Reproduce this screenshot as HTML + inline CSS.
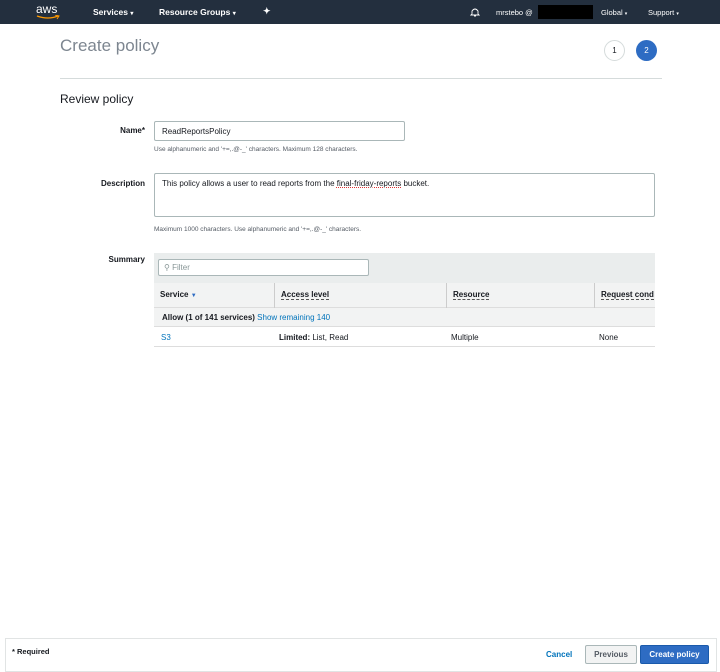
<!DOCTYPE html>
<html><head><style>
*{box-sizing:border-box;margin:0;padding:0}
body{width:720px;height:670px;background:#fff;font-family:"Liberation Sans",Arial,sans-serif;position:relative;overflow:hidden;color:#16191f}
.a{position:absolute;white-space:nowrap}
.nav{position:absolute;left:0;top:0;width:720px;height:24px;background:#232f3e;color:#fff;font-size:8.5px;font-weight:bold}
.lbl{font-size:8px;font-weight:bold;text-align:right;width:60px}
.hint{font-size:6.5px;color:#545b64}
.box{position:absolute;border:1px solid #aab7b8;border-radius:2px;background:#fff;font-size:8px;padding:5px 7px}
.th{position:absolute;top:283px;height:25px;font-size:8px;font-weight:bold;padding:7px 6px;border-left:1px solid #ccc;white-space:nowrap;overflow:hidden}
.dot{border-bottom:1px dashed #555}
</style></head><body>
<div class="nav">
 <div class="a" style="left:36px;top:2px;font-size:12px;font-weight:normal">aws</div>
 <svg class="a" style="left:36px;top:15px" width="24" height="5"><path d="M1 1 Q12 5 22 1" stroke="#f90" stroke-width="1.3" fill="none"/><path d="M19 0 L23 1 L21 4" stroke="#f90" stroke-width="1" fill="none"/></svg>
 <div class="a" style="left:93px;top:7px">Services <span style="font-size:6px">&#9662;</span></div>
 <div class="a" style="left:159px;top:7px">Resource Groups <span style="font-size:6px">&#9662;</span></div>
 <div class="a" style="left:263px;top:6px;font-size:9px">&#10022;</div>
 <svg class="a" style="left:470px;top:7px" width="10" height="10"><path d="M2 7 L2 4 Q5 0 8 4 L8 7 L9 8 L1 8 Z M4 9 L6 9" stroke="#fff" stroke-width="0.9" fill="none"/></svg>
 <div class="a" style="left:496px;top:8px;font-size:7.5px;font-weight:normal">mrstebo @</div>
 <div class="a" style="left:538px;top:5px;width:55px;height:14px;background:#000"></div>
 <div class="a" style="left:601px;top:8px;font-size:7.5px;font-weight:normal">Global <span style="font-size:5px">&#9662;</span></div>
 <div class="a" style="left:648px;top:8px;font-size:7.5px;font-weight:normal">Support <span style="font-size:5px">&#9662;</span></div>
</div>
<div class="a" style="left:60px;top:36px;font-size:17px;color:#7d8690">Create policy</div>
<div class="a" style="left:604px;top:40px;width:21px;height:21px;border:1px solid #d5dbdb;border-radius:50%;font-size:8px;text-align:center;line-height:19px">1</div>
<div class="a" style="left:636px;top:40px;width:21px;height:21px;background:#2e6cc3;border-radius:50%;font-size:8px;text-align:center;line-height:21px;color:#fff">2</div>
<div class="a" style="left:60px;top:78px;width:602px;height:1px;background:#d5dbdb"></div>
<div class="a" style="left:60px;top:92px;font-size:12px;color:#16191f">Review policy</div>

<div class="a lbl" style="left:85px;top:126px">Name*</div>
<div class="box" style="left:154px;top:121px;width:251px;height:20px;font-size:8px">ReadReportsPolicy</div>
<div class="a hint" style="left:154px;top:146px">Use alphanumeric and '+=,.@-_' characters. Maximum 128 characters.</div>

<div class="a lbl" style="left:85px;top:179px">Description</div>
<div class="box" style="left:154px;top:173px;width:501px;height:44px">This policy allows a user to read reports from the <span style="text-decoration:underline dotted #d33">final-friday-reports</span> bucket.</div>
<div class="a hint" style="left:154px;top:226px">Maximum 1000 characters. Use alphanumeric and '+=,.@-_' characters.</div>

<div class="a lbl" style="left:85px;top:255px">Summary</div>
<div class="a" style="left:154px;top:253px;width:501px;height:30px;background:#eaeded"></div>
<div class="box" style="left:158px;top:259px;width:211px;height:17px;padding:3px 5px;color:#879596">&#9906; Filter</div>
<div class="a" style="left:154px;top:283px;width:501px;height:25px;background:#f2f3f3;border-bottom:1px solid #ddd"></div>
<div class="th" style="left:154px;width:120px;border-left:none">Service <span style="color:#2e6cc3;font-size:6px">&#9660;</span></div>
<div class="th" style="left:274px;width:172px"><span class="dot">Access level</span></div>
<div class="th" style="left:446px;width:148px"><span class="dot">Resource</span></div>
<div class="th" style="left:594px;width:61px"><span class="dot">Request cond</span></div>
<div class="a" style="left:154px;top:308px;width:501px;height:19px;background:#f2f3f3;border-bottom:1px solid #ddd"></div>
<div class="a" style="left:162px;top:313px;font-size:8px;font-weight:bold">Allow (1 of 141 services) <span style="font-weight:normal;color:#0073bb">Show remaining 140</span></div>
<div class="a" style="left:154px;top:327px;width:501px;height:20px;border-bottom:1px solid #ddd"></div>
<div class="a" style="left:161px;top:333px;font-size:8px;color:#0073bb">S3</div>
<div class="a" style="left:279px;top:333px;font-size:8px"><b>Limited:</b> List, Read</div>
<div class="a" style="left:451px;top:333px;font-size:8px">Multiple</div>
<div class="a" style="left:599px;top:333px;font-size:8px">None</div>

<div class="a" style="left:5px;top:638px;width:712px;height:34px;border:1px solid #e1e4e4;background:#fff"></div>
<div class="a" style="left:12px;top:647px;font-size:7.5px;font-weight:bold">* Required</div>
<div class="a" style="left:546px;top:650px;font-size:8px;font-weight:bold;color:#0073bb">Cancel</div>
<div class="a" style="left:585px;top:645px;width:52px;height:19px;border:1px solid #aab7b8;border-radius:2px;background:#f2f3f3;font-size:8px;font-weight:bold;text-align:center;line-height:17px;color:#545b64">Previous</div>
<div class="a" style="left:640px;top:645px;width:69px;height:19px;border-radius:2px;background:#2e6cc3;border:1px solid #1a5aab;font-size:8px;font-weight:bold;text-align:center;line-height:17px;color:#fff">Create policy</div>
</body></html>
